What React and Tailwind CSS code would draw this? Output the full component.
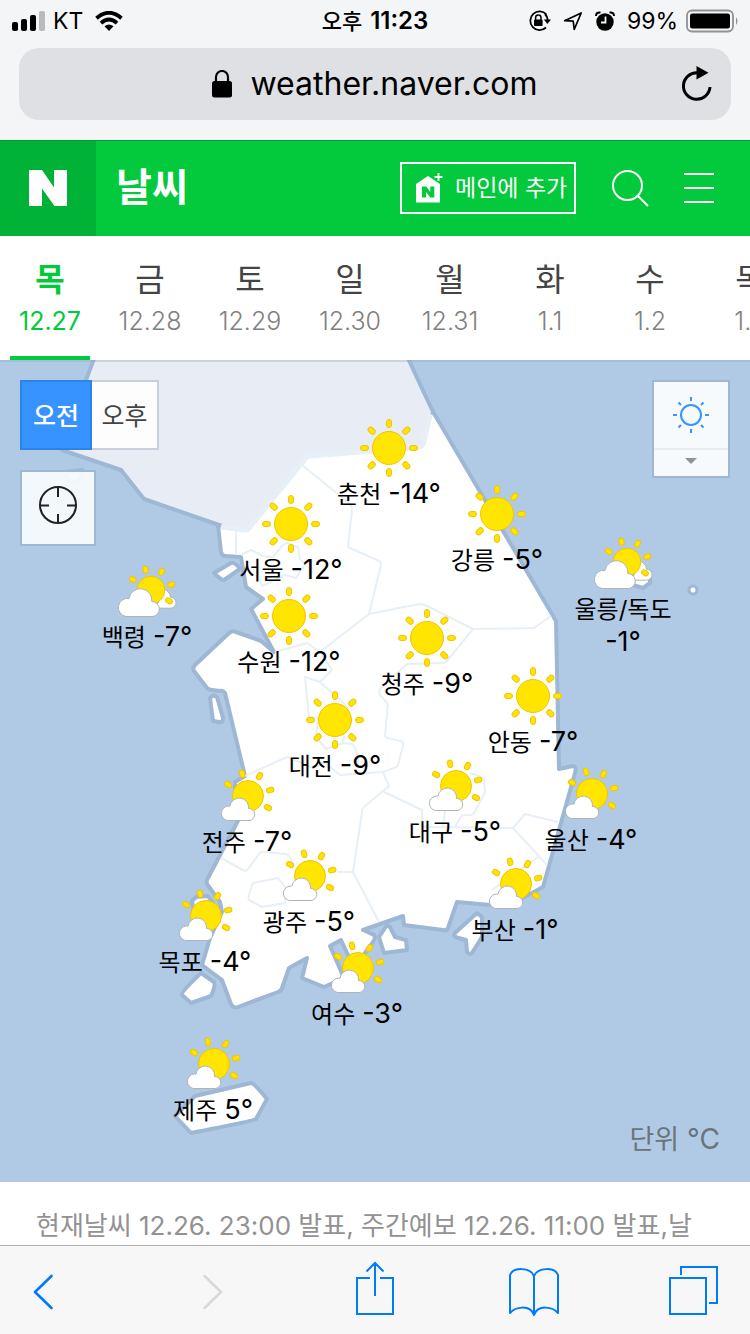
import React from "react";

const days = [
  { day: "목", date: "12.27", active: true },
  { day: "금", date: "12.28" },
  { day: "토", date: "12.29" },
  { day: "일", date: "12.30" },
  { day: "월", date: "12.31" },
  { day: "화", date: "1.1" },
  { day: "수", date: "1.2" },
  { day: "목", date: "1.3" },
];

const MAP_W = 750;
const MAP_H = 822;

// x, y are the centre of the weather icon in map units.
const cities = [
  { name: "춘천", temp: "-14°", x: 389, y: 88, icon: "sun" },
  { name: "강릉", temp: "-5°", x: 497, y: 154, icon: "sun" },
  { name: "서울", temp: "-12°", x: 291, y: 164, icon: "sun" },
  { name: "백령", temp: "-7°", x: 147, y: 231, icon: "cloudy" },
  { name: "울릉/독도", temp: "-1°", x: 623, y: 203, icon: "cloudy", stacked: true },
  { name: "수원", temp: "-12°", x: 289, y: 256, icon: "sun" },
  { name: "청주", temp: "-9°", x: 427, y: 278, icon: "sun" },
  { name: "안동", temp: "-7°", x: 533, y: 336, icon: "sun" },
  { name: "대전", temp: "-9°", x: 335, y: 360, icon: "sun" },
  { name: "대구", temp: "-5°", x: 455, y: 426, icon: "partly" },
  { name: "울산", temp: "-4°", x: 591, y: 434, icon: "partly" },
  { name: "전주", temp: "-7°", x: 247, y: 436, icon: "partly" },
  { name: "광주", temp: "-5°", x: 309, y: 516, icon: "partly" },
  { name: "부산", temp: "-1°", x: 515, y: 524, icon: "partly" },
  { name: "목포", temp: "-4°", x: 205, y: 556, icon: "partly" },
  { name: "여수", temp: "-3°", x: 357, y: 608, icon: "partly" },
  { name: "제주", temp: "5°", x: 213, y: 704, icon: "partly" },
];

function Rays({ angles, distance, length = 8, width = 5 }) {
  return angles.map((a) => (
    <rect
      key={a}
      x={-width / 2}
      y={-distance - length / 2}
      width={width}
      height={length}
      rx={width / 2}
      transform={`rotate(${a})`}
      fill="#ffe500"
      stroke="#f3c400"
    />
  ));
}

function WeatherIcon({ type }) {
  const common = {
    viewBox: "-36 -31 72 62",
    className: "h-[62px] w-[72px] shrink-0",
    "aria-hidden": true,
  };
  if (type === "sun") {
    return (
      <svg {...common}>
        <circle r="16.5" fill="#ffe500" stroke="#f3c400" />
        <Rays angles={[0, 45, 90, 135, 180, 225, 270, 315]} distance={24.5} />
      </svg>
    );
  }
  if (type === "partly") {
    return (
      <svg {...common}>
        <g transform="translate(1 0)">
          <circle r="15.5" fill="#ffe500" stroke="#f3c400" />
          <Rays angles={[-60, -15, 30, 75, 120]} distance={23} length={7.5} />
          <path
            d="M-20.500 24.500A7.300 7.300 0 0 1-19.500 10A5 5 0 0 1-18 10.200A9.300 9.300 0 0 1 .500 12.500A6 6 0 0 1 1 24.500Z"
            fill="#fff"
            stroke="#b0b4b8"
          />
        </g>
      </svg>
    );
  }
  return (
    <svg {...common}>
      <g transform="translate(4 -1)">
        <path
          d="M5 18.200H19.500A5.500 5.500 0 0 0 19.500 7.200A9 9 0 0 0 12 -1Z"
          fill="#fff"
          stroke="#b0b4b8"
        />
        <circle r="13.800" fill="#ffe500" stroke="#f3c400" />
        <Rays angles={[-60, -15, 30, 75, 121]} distance={21} length={7} />
        <path
          d="M-25 26.500A9.100 9.100 0 0 1-22 8.500A11.500 11.500 0 0 1 .800 11.500A7.550 7.550 0 0 1 2 26.500Z"
          fill="#fff"
          stroke="#b0b4b8"
        />
      </g>
    </svg>
  );
}

function KoreaMap() {
  return (
    <svg viewBox="0 360 750 822" className="block h-full w-full" aria-hidden="true">
      <g stroke="#9db7d4" strokeWidth="4" strokeLinejoin="round">
        <path
          d="M95 356L86 380L50 430L62 450L121 470L144 499L219 525L219 529L260 540L440 480L432 410L407 356Z"
          fill="#e8ecf5"
        />
        <path
          d="M432 410L556 621L559 769L573 766Q577 767 575 773L543 887L515 902L490 905L457 902L448 928Q447 931 443 930L404 925L403 916L363 930L374 935Q376 938 373 942L354 968L341 940L330 946L344 978L324 987L302 978L307 958L289 968L282 988Q281 991 278 992L238 1007Q233 1009 231 1004L222 980L202 965L210 938L222 912L220 902L207 884Q206 881 208 878L241 815L235 800L235 782L245 776L225 693Q223 690 220 691L212 690Q209 690 207 688L194 671Q192 668 195 665L228 634Q232 630 236 632L261 641L274 652L251 609L263 599L246 587L241 557L225 556Q222 556 221 552L218 525L247 529L308 455L420 447Z"
          fill="#fff"
        />
        <path d="M214 573L231 563Q235 562 240 569L224 580Q222 581 214 573Z" fill="#fff" />
        <path d="M210 698Q213 694 217 697L223 718Q223 723 219 722L213 721Z" fill="#fff" />
        <path d="M201 973L214 982Q216 985 211 996L191 1003L182 995Q181 992 201 973Z" fill="#fff" />
        <path d="M195 1096L251 1083Q254 1083 267 1099L256 1119Q254 1121 191 1133L175 1116Z" fill="#fff" />
        <path d="M387 925L390 927L395 937L406 940L407 950L384 953L379 937Z" fill="#fff" />
        <path d="M477 913L482 917V937L472 953Q469 955 467 952L466 940L455 937Q453 935 456 932Z" fill="#fff" />
        <path d="M192 901L196 897L208 896L213 903L205 918H195Z" fill="#fff" />
        <path d="M633 572H650V583L643 588L633 585Z" fill="#fff" />
        <circle cx="693" cy="590" r="4" fill="#fff" strokeWidth="3" />
        <path d="M65 472L82 470L77 483L69 481Z" fill="#fff" />
      </g>
      <path
        d="M221 525L247 529Q250 528 308 455L422 447L431 412L405 360H98L300 440Z"
        fill="#e8ecf5"
      />
      <g fill="none" stroke="#e7eff7" strokeWidth="2" strokeLinejoin="round">
        <path
          strokeWidth="5"
          d="M221 527L245 530Q248 530 250 527L306 458Q308 456 311 456L360 452L420 447Q423 446 424 442L430 414"
        />
        <path d="M236 529V555" />
        <path d="M241 555L251 550L263 556L273 557L282 546L287 543L298 547L300 559L305 564L296 578L285 575L262 586L258 575V562" />
        <path d="M302 465L350 504Q353 507 352 510L348 547L379 561Q382 562 381 565L369 614L320 652L307 643L275 652" />
        <path d="M369 614L419 604Q422 604 425 605L473 629L534 628L551 616" />
        <path d="M320 652L332 670L320 682L305 677L309 717L318 718L316 737L326 749L343 743L348 707L320 682" />
        <path d="M343 743L352 744Q355 745 358 758V765" />
        <path d="M473 629L447 661Q445 663 442 663L407 664L381 688Q378 692 380 695L388 704L385 735Q385 738 388 738L401 741Q404 742 403 746L398 765Q397 767 394 768L383 772L340 775L324 762L313 768L287 757L245 776" />
        <path d="M383 772L389 786L364 807Q362 809 362 812L353 872L379 922M353 872H337" />
        <path d="M384 792L422 810V827L513 828L525 814L558 822M513 828L547 865M538 857L492 890" />
        <path d="M445 811L443 827M470 773Q484 777 484 779L485 792L474 813Q473 816 462 815L455 827" />
        <path d="M221 858L243 870Q246 872 248 869L259 854Q261 851 264 852L286 854Q290 855 293 865" />
        <path d="M253 883L278 878L286 888L285 903L262 907L249 900Q247 898 253 883Z" />
      </g>
    </svg>
  );
}

function StatusBar() {
  return (
    <div className="grid h-[42px] grid-cols-[1fr_auto_1fr] items-center px-3 text-[23px] leading-none text-black">
      <div className="flex items-center gap-2">
        <svg viewBox="0 0 33 20" className="h-5 w-[33px]" aria-hidden="true">
          <rect x="0" y="11" width="6" height="9" rx="2" />
          <rect x="9" y="8" width="6" height="12" rx="2" />
          <rect x="18" y="4" width="6" height="16" rx="2" />
          <rect x="27" y="0" width="6" height="20" rx="2" fill="#b8babb" />
        </svg>
        <span>KT</span>
        <svg viewBox="0 0 28 20" className="ml-1 h-5 w-7" aria-hidden="true">
          <g fill="none" stroke="#000" strokeWidth="3.800">
            <path d="M1.500 7.200Q14-3.600 26.500 7.200" />
            <path d="M6 12.200Q14 5 22 12.200" />
          </g>
          <path d="M14 20L9.500 15.300Q14 11.800 18.500 15.300Z" />
        </svg>
      </div>
      <span className="flex items-baseline gap-2 font-semibold">
        <span className="text-[22px] font-medium">오후</span>
        <span className="text-[24px]">11:23</span>
      </span>
      <div className="flex items-center justify-end">
        <svg viewBox="0 0 23 22" className="mr-3 h-[22px] w-[23px]" aria-hidden="true">
          <path d="M18.500 4.500A9.300 9.300 0 1 0 18 17.500M19.600 11A9.300 9.300 0 0 0 17 4" fill="none" stroke="#000" strokeWidth="1.800" />
          <path d="M15.800 9.500H23L19.400 14Z" />
          <rect x="6" y="9.500" width="8.600" height="6.500" rx="1" />
          <path d="M7.600 10V7.800A2.700 2.700 0 0 1 13 7.800V10" fill="none" stroke="#000" strokeWidth="1.500" />
        </svg>
        <svg viewBox="0 0 20 20" className="mr-3 h-5 w-5" aria-hidden="true">
          <path d="M1.700 9.700L18.200 2L11.200 18.300L10.200 10.200Z" fill="none" stroke="#000" strokeWidth="1.700" strokeLinejoin="round" />
        </svg>
        <svg viewBox="0 0 20 20" className="mr-3 h-5 w-5" aria-hidden="true">
          <circle cx="10" cy="11" r="8.700" />
          <path d="M1 5Q1 1 5.500 1.500M19 5Q19 1 14.500 1.500" fill="none" stroke="#000" strokeWidth="2" />
          <path d="M10.500 5.500V11.500H6" fill="none" stroke="#f4f5f7" strokeWidth="1.800" />
        </svg>
        <span>99%</span>
        <svg viewBox="0 0 53 24" className="-mr-px ml-2 h-6 w-[53px]" aria-hidden="true">
          <rect x="1" y="1.500" width="46" height="21" rx="5" fill="none" stroke="#909193" strokeWidth="1.800" />
          <rect x="4" y="4.500" width="40" height="15" rx="2.500" />
          <path d="M50 8Q53 12 50 16Z" fill="#909193" />
        </svg>
      </div>
    </div>
  );
}

function AddressBar() {
  return (
    <div className="px-[19px] pt-[6px] pb-5">
      <div className="flex h-[72px] items-center rounded-[20px] bg-[#dfe0e4] px-4">
        <span className="w-9" />
        <button type="button" className="flex flex-1 items-center justify-center gap-[18px] text-[32px] leading-none text-black">
          <svg viewBox="0 0 20 28" className="h-7 w-5" aria-hidden="true">
            <path d="M4 12V7A6 6 0 0 1 16 7V12" fill="none" stroke="#000" strokeWidth="2.200" />
            <rect y="11" width="20" height="16.500" rx="2.500" />
          </svg>
          weather.naver.com
        </button>
        <button type="button" aria-label="새로고침">
          <svg viewBox="0 0 36 36" className="h-9 w-9" aria-hidden="true">
            <path d="M18.500 6.700A13.300 13.300 0 1 0 31 21" fill="none" stroke="#000" strokeWidth="3" />
            <path d="M17.500 0L29.500 6.800L17.500 13.500Z" />
          </svg>
        </button>
      </div>
    </div>
  );
}

function SiteHeader() {
  return (
    <header className="relative flex h-24 items-stretch bg-[#03c93c] text-white">
      <a href="#naver" aria-label="NAVER" className="flex w-24 items-center justify-center bg-[#00b336]">
        <svg viewBox="0 0 38 36" className="h-9 w-[38px]" aria-hidden="true">
          <path d="M0 0H13L25 17.500V0H38V36H25.500L13 18.500V36H0Z" fill="#fff" />
        </svg>
      </a>
      <h1 className="flex flex-1 items-center pb-1 pl-5 text-[39px] font-bold leading-none">날씨</h1>
      <div className="flex items-center">
        <button type="button" className="flex h-[52px] w-[176px] items-center gap-3 border-2 border-white pl-[14px] text-[23px] leading-none whitespace-nowrap">
          <svg viewBox="0 0 27 30" className="h-[30px] w-[27px] shrink-0" aria-hidden="true">
            <path d="M0 29.500V11L12 3L24 11V29.500Z" fill="#fff" />
            <path d="M6 13.500H10.300L14.300 19V13.500H18.300V24.500H14.300L10 19V24.500H6Z" fill="#03c93c" />
            <path d="M22.500 0V8M18.500 4H26.500" stroke="#fff" strokeWidth="1.800" />
          </svg>
          메인에 추가
        </button>
        <button type="button" aria-label="검색" className="ml-9">
          <svg viewBox="0 0 37 37" className="h-[37px] w-[37px]" aria-hidden="true">
            <circle cx="15.500" cy="15.500" r="14.500" fill="none" stroke="#fff" strokeWidth="2" />
            <path d="M26 26L36 36" stroke="#fff" strokeWidth="2" />
          </svg>
        </button>
        <button type="button" aria-label="메뉴" className="mr-9 ml-[35px]">
          <svg viewBox="0 0 30 30" className="h-[30px] w-[30px]" aria-hidden="true">
            <path d="M0 1H30M0 15H30M0 29H30" stroke="#fff" strokeWidth="2" />
          </svg>
        </button>
      </div>
      <div className="absolute inset-x-0 top-0 h-px bg-[#0a9734]" />
    </header>
  );
}

function DayTabs() {
  return (
    <nav className="flex h-[124px] overflow-hidden bg-white">
      {days.map((d, i) => (
        <a
          key={i}
          href={`#day-${i}`}
          className="flex w-[100px] shrink-0 flex-col items-center px-[10px] pt-6"
        >
          <span
            className={
              d.active
                ? "text-[32px] font-bold leading-10 text-[#03c93c]"
                : "text-[32px] leading-10 text-[#444]"
            }
          >
            {d.day}
          </span>
          <span
            className={
              d.active
                ? "mt-1 text-[25px] leading-[34px] text-[#03c93c]"
                : "mt-1 text-[25px] font-light leading-[34px] text-[#808080]"
            }
          >
            {d.date}
          </span>
          {d.active && <span className="mt-auto h-1 w-full bg-[#03c93c]" />}
        </a>
      ))}
    </nav>
  );
}

function MapControls() {
  return (
    <>
      <div className="absolute top-5 left-5 flex flex-col items-start gap-5">
        <div className="flex h-[70px] text-[25px] leading-none whitespace-nowrap">
          <button type="button" className="flex w-[72px] items-center justify-center border-2 border-[#2c83e8] bg-[#3693ff] pt-[2px] font-medium text-white">
            오전
          </button>
          <button type="button" className="flex w-[67px] items-center justify-center border-2 border-l-0 border-[#c8d0e0] bg-[#fdfdfe] pt-[2px] text-[#444]">
            오후
          </button>
        </div>
        <button type="button" aria-label="현재 위치" className="flex h-[76px] w-[76px] justify-center border-2 border-[#9db7d4] bg-[#f7fafd]/95 pt-[14px]">
          <svg viewBox="0 0 38 38" className="h-[38px] w-[38px]" aria-hidden="true">
            <g fill="none" stroke="#222" strokeWidth="2">
              <circle cx="19" cy="19" r="18" />
              <path d="M19 1V11M19 28V37M1 19.500H10M28 19.500H37" />
            </g>
          </svg>
        </button>
      </div>
      <button type="button" aria-label="날씨 종류 선택" className="absolute top-5 right-5 flex h-[98px] w-[78px] flex-col border-2 border-[#9db7d4] bg-[#f7fafd]">
        <span className="flex h-[68px] w-full items-center justify-center border-b-2 border-[#ececec]">
          <svg viewBox="-18 -18 36 36" className="h-9 w-9" aria-hidden="true">
            <g fill="none" stroke="#3693ff" strokeWidth="2">
              <circle r="10" />
              <path d="M0-18V-14M0 14V18M-18 0H-14M14 0H18M-12.500-12.500L-10-10M12.500-12.500L10-10M-12.500 12.500L-10 10M12.500 12.500L10 10" />
            </g>
          </svg>
        </span>
        <span className="flex w-full flex-1 items-center justify-center pb-1">
          <svg viewBox="0 0 12 6" className="h-[6px] w-3" aria-hidden="true">
            <path d="M0 0H12L6 6Z" fill="#8f9396" />
          </svg>
        </span>
      </button>
    </>
  );
}

function WeatherMap() {
  return (
    <main className="relative aspect-[750/822] w-full overflow-hidden bg-[#b0cae5]">
      <KoreaMap />
      <div className="absolute inset-x-0 top-0 h-[2px] bg-[#8fa6c0]/35" />
      {cities.map((c) => (
        <div
          key={c.name}
          className="absolute flex h-0 w-0 flex-col items-center"
          style={{
            left: `${(c.x / MAP_W) * 100}%`,
            top: `${(c.y / MAP_H) * 100}%`,
          }}
        >
          <a href={`#${c.name}`} className="-mt-[31px] flex flex-col items-center text-black">
            <WeatherIcon type={c.icon} />
            <span
              className={
                c.stacked
                  ? "flex flex-col items-center text-[27px] leading-8 whitespace-nowrap"
                  : "flex items-baseline gap-[7px] text-[27px] leading-[30px] whitespace-nowrap"
              }
            >
              <span className="text-[24px]">{c.name}</span>
              <span>{c.temp}</span>
            </span>
          </a>
        </div>
      ))}
      <MapControls />
      <p className="absolute right-[30px] bottom-6 flex items-baseline gap-2 text-[28px] leading-9 text-[#6b747d]">
        <span className="text-[27px]">단위</span>
        <span>°C</span>
      </p>
    </main>
  );
}

function Toolbar() {
  const stroke = { fill: "none", stroke: "#007aff", strokeWidth: 2 };
  return (
    <footer className="sticky bottom-0 flex h-[89px] items-center justify-between border-t border-[#b2b2b2] bg-[#f7f7f7] pr-8 pl-[33px]">
      <button type="button" aria-label="뒤로" className="flex w-[50px] pt-1">
        <svg viewBox="0 0 20 36" className="h-9 w-5" aria-hidden="true">
          <path d="M18.500 2L2 18L18.500 34" {...stroke} strokeWidth="2.600" strokeLinecap="round" strokeLinejoin="round" />
        </svg>
      </button>
      <button type="button" aria-label="앞으로" disabled className="flex w-[50px] justify-center pt-1 pr-2">
        <svg viewBox="0 0 20 36" className="h-9 w-5" aria-hidden="true">
          <path d="M1.500 2L18 18L1.500 34" {...stroke} stroke="#d8d8d8" strokeWidth="2.600" strokeLinecap="round" strokeLinejoin="round" />
        </svg>
      </button>
      <button type="button" aria-label="공유" className="flex w-[50px] justify-center pr-[2px] pb-1">
        <svg viewBox="0 0 38 54" className="h-[54px] w-[38px]" aria-hidden="true">
          <path d="M14 17H1V53H37V17H24M19 35V2M10.500 10.500L19 2L27.500 10.500" {...stroke} />
        </svg>
      </button>
      <button type="button" aria-label="책갈피" className="flex w-[50px] justify-center pt-1">
        <svg viewBox="0 0 50 48" className="h-12 w-[50px]" aria-hidden="true">
          <path d="M25 47V8C21-1 4-1 1 7V45C6 39 21 36 25 47C29 36 44 39 49 45V7C46-1 29-1 25 8" {...stroke} strokeLinejoin="round" />
        </svg>
      </button>
      <button type="button" aria-label="탭" className="flex w-[50px] justify-end">
        <svg viewBox="0 0 49 49" className="h-[49px] w-[49px]" aria-hidden="true">
          <path d="M1 12H37V48H1ZM12 9V1H48V37H40" {...stroke} />
        </svg>
      </button>
    </footer>
  );
}

export default function App() {
  return (
    <div className="flex min-h-screen flex-col bg-white font-['Inter','Noto_Sans_CJK_KR',sans-serif]">
      <div className="bg-[#f4f5f7]">
        <StatusBar />
        <AddressBar />
      </div>
      <SiteHeader />
      <DayTabs />
      <WeatherMap />
      <p className="flex-1 overflow-hidden pt-6 pl-9 text-[26px] leading-[39px] whitespace-nowrap text-[#929292]">
        현재날씨 12.26. 23:00 발표, 주간예보 12.26. 11:00 발표,날
      </p>
      <Toolbar />
    </div>
  );
}
